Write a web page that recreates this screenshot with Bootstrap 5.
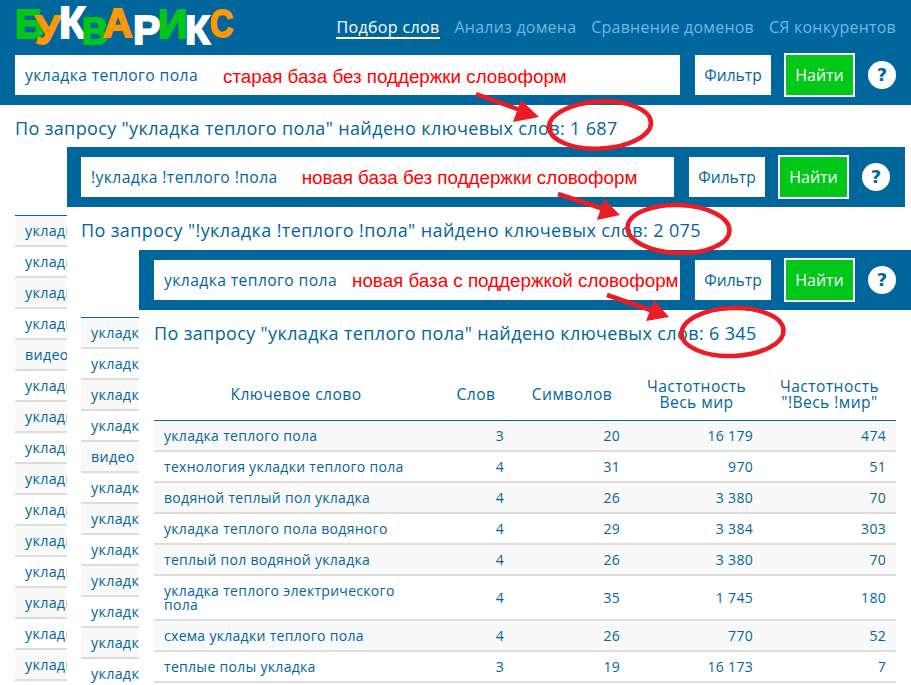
<!DOCTYPE html>
<html lang="ru"><head><meta charset="utf-8"><title>Букварикс</title>
<link href="https://cdn.jsdelivr.net/npm/bootstrap@5.3.0/dist/css/bootstrap.min.css" rel="stylesheet">
<style>
html,body{height:685px;overflow:hidden;background:#fff}
body{font-family:"Open Sans","DejaVu Sans",sans-serif;color:#00669b;font-size:14px;position:relative}
.blue-bar{background:#00669b}
.top-head{height:45px;padding:0 15px}
.logo-word{font:700 41px/42px "Liberation Sans",sans-serif;height:45px;width:225px;align-self:flex-start}
.logo-word span{display:block;flex:none;-webkit-text-stroke:1.8px currentColor}
.logo-word span:nth-child(1){width:20px;margin-top:3px}
.logo-word span:nth-child(2){width:24px;margin-top:9px}
.logo-word span:nth-child(3){width:23px;margin-top:2px;font-size:44px}
.logo-word span:nth-child(4){width:21px;margin-top:14px;font-size:36px;line-height:36px}
.logo-word span:nth-child(5){width:30px;margin-top:2px}
.logo-word span:nth-child(6){width:25px;margin-top:9px}
.logo-word span:nth-child(7){width:27px;margin-top:3px}
.logo-word span:nth-child(8){width:25px;margin-top:9px}
.logo-word span:nth-child(9){width:24px;margin-top:3px;font-size:38px;transform:scaleX(.85);transform-origin:left}
.lg{color:#00c718}.lo{color:#ff9800}.lw{color:#fff}
.main-menu{gap:15px;margin-top:10px}
.menu-link{color:#6cb8e8;font-size:16px;letter-spacing:.22px;text-decoration:none;line-height:20px}
.menu-link.active{color:#fff;border-bottom:2px solid #fff;letter-spacing:.35px}
.search-row{height:60px;padding:0 15px;gap:15px}
.q-box{background:#fff;height:40px;flex:1 1 0;min-width:0;padding:2px 10px 0;font-size:15.7px;letter-spacing:.4px;white-space:nowrap;overflow:hidden}
.note{color:#f00;font-family:"Liberation Sans",sans-serif;font-size:18.8px;letter-spacing:0;margin-left:25px}
.note-a{margin-top:3px}
.note-b{margin-left:24px}.note-c{margin-left:15px}
.filter-btn{background:#fff;color:#00669b;width:76px;height:40px;border:0;border-radius:0;font-size:15.6px;padding:1px 0 0;flex:none}
.go-btn{background:#00c718;color:#fff;width:71px;height:44px;border:2px solid #fff;border-radius:0;font-size:16px;padding:0;margin-left:-2px;flex:none}
.help-dot{width:28px;height:28px;border-radius:50%;background:#fff;color:#00669b;font:700 18px/28px "DejaVu Sans",sans-serif;text-align:center;margin-left:-2px;flex:none}
.found{font-size:18px;letter-spacing:.36px;line-height:24px;padding:0 15px;white-space:nowrap;margin:11px 0 0}
.found-b{padding-left:14px;letter-spacing:.39px}
.win{position:absolute;background:#fff;overflow:hidden}
.win-a{left:0;top:0;width:911px;height:685px}
.win-b{left:67px;top:147px;width:838px;height:538px}
.win-c{left:139px;top:250px;width:772px;height:435px}
.win-b .search-row{padding:0 14px}
.win-b .help-dot{margin-right:1px}
.kw-list{padding:0;margin:0;list-style:none;border-top:1px solid #00669b;width:300px}
.kw-list li{height:31px;line-height:30px;padding:0 10px;border-bottom:2px solid #ddd;font-size:14.3px;letter-spacing:.3px;white-space:nowrap;box-sizing:border-box}
.kw-list li:nth-child(odd){background:#f9f9f9}
.list-a{margin:75px 0 0 15px}
.list-b{margin:75px 0 0 14px}
.tbl-wrap{padding:0 15px;margin-top:21px}
.kw-table{--bs-table-color:#00669b;--bs-table-bg:transparent;--bs-table-striped-color:#00669b;--bs-table-striped-bg:#f9f9f9;--bs-table-border-color:#ddd;width:742px;table-layout:fixed;margin:0;letter-spacing:.3px}
.kw-table th{font-weight:400;text-align:center;vertical-align:middle;font-size:15.6px;line-height:16px;height:54px;padding:2px 0 0;border-bottom:1px solid #00669b;letter-spacing:.45px}
.kw-table td{padding:8px 10px 7px;line-height:14px;height:31px;font-size:14px;text-align:right;vertical-align:middle;border-bottom:2px solid #ddd}
.kw-table td:first-child{text-align:left;padding-right:30px}
.ink{position:absolute;left:0;top:0;pointer-events:none}
</style></head><body>

<section class="win win-a">
 <div class="blue-bar">
  <div class="top-head d-flex align-items-center justify-content-between">
   <div class="logo-word d-flex"><span class="lg">Б</span><span class="lo">У</span><span class="lw">К</span><span class="lg">В</span><span class="lo">А</span><span class="lw">Р</span><span class="lg">И</span><span class="lw">К</span><span class="lo">С</span></div>
   <nav class="main-menu d-flex"><a class="menu-link active" href="#">Подбор слов</a><a class="menu-link" href="#">Анализ домена</a><a class="menu-link" href="#">Сравнение доменов</a><a class="menu-link" href="#">СЯ конкурентов</a></nav>
  </div>
  <div class="search-row d-flex align-items-center">
   <div class="q-box d-flex align-items-center">укладка теплого пола<span class="note note-a">старая база без поддержки словоформ</span></div>
   <button class="btn filter-btn">Фильтр</button><button class="btn go-btn">Найти</button><div class="help-dot">?</div>
  </div>
 </div>
 <p class="found">По запросу "укладка теплого пола" найдено ключевых слов: 1 687</p>
 <ul class="kw-list list-a">
  <li>укладка</li><li>укладка</li><li>укладка</li><li>укладка</li><li>видео</li><li>укладка</li><li>укладка</li><li>укладка</li><li>укладка</li><li>укладка</li><li>укладка</li><li>укладка</li><li>укладка</li><li>укладка</li><li>укладка</li><li>укладка</li>
 </ul>
</section>

<section class="win win-b">
 <div class="blue-bar search-row d-flex align-items-center">
  <div class="q-box d-flex align-items-center">!укладка !теплого !пола<span class="note note-b">новая база без поддержки словоформ</span></div>
  <button class="btn filter-btn">Фильтр</button><button class="btn go-btn">Найти</button><div class="help-dot">?</div>
 </div>
 <p class="found found-b">По запросу "!укладка !теплого !пола" найдено ключевых слов: 2 075</p>
 <ul class="kw-list list-b">
  <li>укладка</li><li>укладка</li><li>укладка</li><li>укладка</li><li>видео</li><li>укладка</li><li>укладка</li><li>укладка</li><li>укладка</li><li>укладка</li><li>укладка</li><li>укладка</li>
 </ul>
</section>

<section class="win win-c">
 <div class="blue-bar search-row d-flex align-items-center">
  <div class="q-box d-flex align-items-center">укладка теплого пола<span class="note note-c">новая база с поддержкой словоформ</span></div>
  <button class="btn filter-btn">Фильтр</button><button class="btn go-btn">Найти</button><div class="help-dot">?</div>
 </div>
 <p class="found">По запросу "укладка теплого пола" найдено ключевых слов: 6 345</p>
 <div class="tbl-wrap">
  <table class="table table-striped kw-table">
   <colgroup><col style="width:284px"><col style="width:76px"><col style="width:116px"><col style="width:133px"><col style="width:133px"></colgroup>
   <thead><tr><th>Ключевое слово</th><th>Слов</th><th>Символов</th><th>Частотность<br>Весь мир</th><th>Частотность<br>"!Весь !мир"</th></tr></thead>
   <tbody>
    <tr><td>укладка теплого пола</td><td>3</td><td>20</td><td>16 179</td><td>474</td></tr>
    <tr><td>технология укладки теплого пола</td><td>4</td><td>31</td><td>970</td><td>51</td></tr>
    <tr><td>водяной теплый пол укладка</td><td>4</td><td>26</td><td>3 380</td><td>70</td></tr>
    <tr><td>укладка теплого пола водяного</td><td>4</td><td>29</td><td>3 384</td><td>303</td></tr>
    <tr><td>теплый пол водяной укладка</td><td>4</td><td>26</td><td>3 380</td><td>70</td></tr>
    <tr><td>укладка теплого электрического пола</td><td>4</td><td>35</td><td>1 745</td><td>180</td></tr>
    <tr><td>схема укладки теплого пола</td><td>4</td><td>26</td><td>770</td><td>52</td></tr>
    <tr><td>теплые полы укладка</td><td>3</td><td>19</td><td>16 173</td><td>7</td></tr>
   </tbody>
  </table>
 </div>
</section>

<svg class="ink" width="911" height="685" viewBox="0 0 911 685" fill="none">
 <g stroke="#ed1c24" stroke-width="4.5">
  <ellipse cx="600" cy="125" rx="51" ry="23.5" transform="rotate(-3 600 125)"/>
  <ellipse cx="678.500" cy="229" rx="51" ry="24" transform="rotate(2 678 229)"/>
  <ellipse cx="732.500" cy="332" rx="51" ry="24" transform="rotate(-2 732 332)"/>
  <path d="M476 94 528 113M558 194 610 211M607 295 659 313"/>
 </g>
 <g fill="#ed1c24">
  <path d="M539 117 513 122 521 100Z"/>
  <path d="M620 215 597 220 604 199Z"/>
  <path d="M669 317 646 321 654 300Z"/>
 </g>
</svg>
</body></html>
